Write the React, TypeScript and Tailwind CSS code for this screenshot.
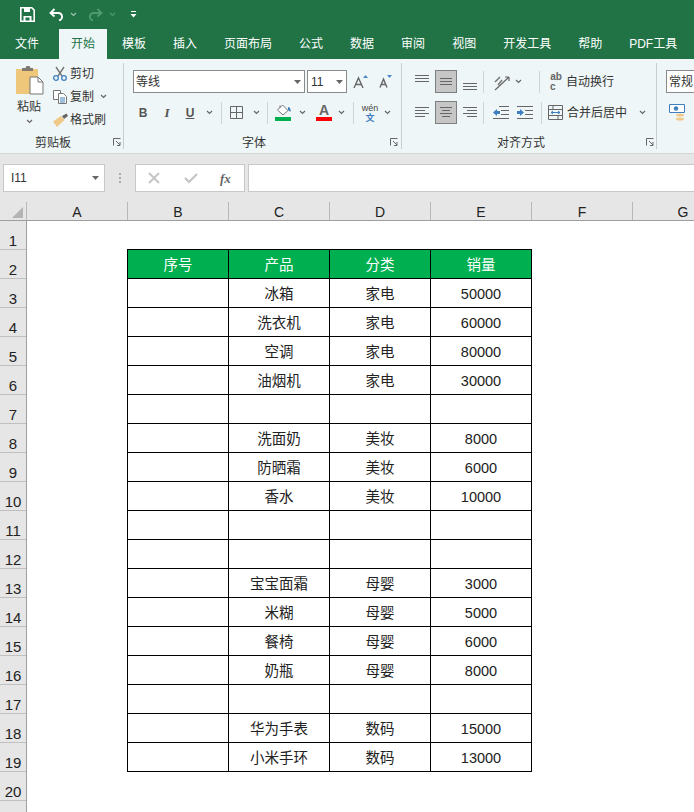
import type { ReactNode } from "react";

const font = `"Liberation Sans", "Noto Sans CJK SC", sans-serif`;

const tabs = ["文件", "开始", "模板", "插入", "页面布局", "公式", "数据", "审阅", "视图", "开发工具", "帮助", "PDF工具"];

const rows = [
  ["冰箱", "家电", "50000"],
  ["洗衣机", "家电", "60000"],
  ["空调", "家电", "80000"],
  ["油烟机", "家电", "30000"],
  ["", "", ""],
  ["洗面奶", "美妆", "8000"],
  ["防晒霜", "美妆", "6000"],
  ["香水", "美妆", "10000"],
  ["", "", ""],
  ["", "", ""],
  ["宝宝面霜", "母婴", "3000"],
  ["米糊", "母婴", "5000"],
  ["餐椅", "母婴", "6000"],
  ["奶瓶", "母婴", "8000"],
  ["", "", ""],
  ["华为手表", "数码", "15000"],
  ["小米手环", "数码", "13000"],
];

function Chevron({ color = "#666" }: { color?: string }) {
  return (
    <svg width="7" height="5" viewBox="0 0 7 5" className="shrink-0">
      <path d="M1 1l2.500 2.500L6 1" fill="none" stroke={color} strokeWidth="1.200" />
    </svg>
  );
}

function Caret() {
  return (
    <svg width="7" height="4" viewBox="0 0 7 4" className="shrink-0">
      <path d="M0 0h7L3.500 4z" fill="#666" />
    </svg>
  );
}

function Launcher({ className }: { className: string }) {
  return (
    <svg width="8" height="8" viewBox="0 0 8 8" className={className}>
      <path d="M.5 7.500V.5h7M3 3l4 4M7 4v3.500H4" fill="none" stroke="#666" strokeWidth="1" />
    </svg>
  );
}

function Sep({ className = "h-[22px]" }: { className?: string }) {
  return <div className={`w-px shrink-0 bg-[#cfd4d5] ${className}`} />;
}

// lines of the align buttons, y and x ranges given per line
function Lines({ lines, color = "#666" }: { lines: [number, number, number][]; color?: string }) {
  return (
    <svg width="14" height="14" viewBox="0 0 14 14" className="shrink-0">
      {lines.map(([y, a, b]) => (
        <path key={`${y}-${a}`} d={`M${a} ${y + 0.5}H${b}`} stroke={color} strokeWidth="1" />
      ))}
    </svg>
  );
}

function AlignBox({ children, on }: { children: ReactNode; on?: boolean }) {
  return (
    <div className={`flex h-[23px] w-[22px] shrink-0 items-center justify-center ${on ? "border border-[#7f7f7f] bg-[#c6c6c6]" : ""}`}>
      {children}
    </div>
  );
}

function ClipRow({ icon, label, chevron }: { icon: ReactNode; label: string; chevron?: boolean }) {
  return (
    <div className="flex h-[23px] items-center">
      <div className="flex w-[18px] justify-center">{icon}</div>
      <span className="ml-[1px] text-[12px] leading-none text-[#333]">{label}</span>
      {chevron && <div className="ml-[6px]"><Chevron /></div>}
    </div>
  );
}

function TitleBar() {
  return (
    <div className="flex h-[29px] items-center bg-[#217346] pl-[20px]">
      <svg width="15" height="15" viewBox="0 0 15 15">
        <path d="M.8.8h11l2.400 2.400v11H.8z" fill="none" stroke="#fff" strokeWidth="1.600" />
        <path d="M4 1h6v4H4zM3.500 9h8v5h-8z" fill="#fff" />
        <path d="M5.500 10.500h4v3h-4z" fill="#217346" />
      </svg>
      <svg width="15" height="13" viewBox="0 0 15 13" className="ml-[14px]">
        <path d="M5.500 1L1.500 5l4 3.500M2 5h7c5 0 5.500 6.500 1 7.500" fill="none" stroke="#fff" strokeWidth="1.900" />
      </svg>
      <div className="ml-[6px]"><Chevron color="#9cc4ae" /></div>
      <svg width="15" height="13" viewBox="0 0 15 13" className="ml-[11px]">
        <path d="M9.500 1l4 4-4 3.500M13 5H6c-5 0-5.500 6.500-1 7.500" fill="none" stroke="#4f9a70" strokeWidth="1.900" />
      </svg>
      <div className="ml-[6px]"><Chevron color="#4f9a70" /></div>
      <svg width="7" height="7" viewBox="0 0 7 7" className="ml-[14px]">
        <path d="M1 .5h5" stroke="#fff" strokeWidth="1" />
        <path d="M.5 3h6L3.500 6.500z" fill="#fff" />
      </svg>
    </div>
  );
}

function TabBar() {
  return (
    <div className="flex h-[30px] gap-[3px] bg-[#217346] pl-[3px]">
      {tabs.map((t, i) => (
        <div
          key={t}
          className={`flex items-center px-3 text-[12px] ${i === 0 ? "mr-[5px]" : ""} ${
            i === 1 ? "bg-[#eff6f7] text-[#217346]" : "text-white"
          }`}
        >
          {t}
        </div>
      ))}
    </div>
  );
}

function ClipboardGroup() {
  return (
    <div className="relative flex h-[86px] w-[122px] shrink-0 border-r border-[#c8cdce]">
      <div className="flex w-[49px] flex-col items-center pl-[5px] pt-[2px]">
        <svg width="29" height="30" viewBox="0 0 29 30">
          <path d="M1 4h22v25H1z" fill="#eec77b" />
          <path d="M7 4V3h3.500l1-2h3l1 2H18v3H7z" fill="#807a70" />
          <path d="M15 12h8l5 5v12H15z" fill="#fff" stroke="#777" strokeWidth="1" />
          <path d="M23 12v5h5" fill="none" stroke="#777" strokeWidth="1" />
        </svg>
        <span className="mt-[4px] text-[12px] leading-[16px] text-[#333]">粘贴</span>
        <div className="mt-[4px]"><Chevron /></div>
      </div>
      <div className="-mt-px flex flex-col">
        <ClipRow
          label="剪切"
          icon={
            <svg width="14" height="15" viewBox="0 0 14 15">
              <path d="M3 1l6 9M11 1L5 10" stroke="#777" strokeWidth="1.400" fill="none" />
              <circle cx="3" cy="12" r="2.300" fill="none" stroke="#3f7fbf" strokeWidth="1.300" />
              <circle cx="11" cy="12" r="2.300" fill="none" stroke="#3f7fbf" strokeWidth="1.300" />
            </svg>
          }
        />
        <ClipRow
          label="复制"
          chevron
          icon={
            <svg width="15" height="14" viewBox="0 0 15 14">
              <path d="M.5.500h7v9h-7z" fill="#fff" stroke="#777" />
              <path d="M5.500 3.500h5l3 3v7h-8z" fill="#fff" stroke="#777" />
              <path d="M7 8h5M7 10h5M7 12h5" stroke="#3f7fbf" strokeWidth="1" />
            </svg>
          }
        />
        <ClipRow
          label="格式刷"
          icon={
            <svg width="16" height="14" viewBox="0 0 16 14">
              <path d="M10 3l2 3 4-3-1.500-2.500z" fill="#666" />
              <path d="M9 3L1 8.500 5 14l7.500-7z" fill="#f0c988" />
            </svg>
          }
        />
      </div>
      <span className="absolute left-[33px] top-[72px] text-[12px] leading-[16px] text-[#333]">剪贴板</span>
      <Launcher className="absolute right-[2px] top-[75px]" />
    </div>
  );
}

function FontGroup() {
  return (
    <div className="relative h-[86px] w-[278px] shrink-0 border-r border-[#c8cdce] pl-[9px] pt-[7px]">
      <div className="flex h-[23px] items-center">
        <div className="flex h-[23px] w-[172px] items-center justify-between border border-[#8a8a8a] bg-white pl-[2px] pr-[3px] text-[12px] text-[#333]">
          等线
          <Caret />
        </div>
        <div className="ml-[2px] flex h-[23px] w-[40px] items-center justify-between border border-[#8a8a8a] bg-white pl-[3px] pr-[3px] text-[12px] text-[#333]">
          11
          <Caret />
        </div>
        <svg width="16" height="14" viewBox="0 0 16 14" className="ml-[6px]">
          <path d="M1 13L5.500 3 10 13M3 9.500h5" fill="none" stroke="#666" strokeWidth="1.400" />
          <path d="M10 3l2.500-3L15 3z" fill="#4a86c5" />
        </svg>
        <svg width="14" height="13" viewBox="0 0 14 13" className="ml-[10px]">
          <path d="M1 12.500L4.500 4 8 12.500M2.500 9.500h4" fill="none" stroke="#666" strokeWidth="1.400" />
          <path d="M8 0h5l-2.500 3z" fill="#4a86c5" />
        </svg>
      </div>
      <div className="mt-[8px] flex h-[23px] items-center">
        <span className="ml-[5px] w-[10px] text-center text-[12px] font-bold text-[#555]">B</span>
        <span className="ml-[15px] w-[8px] text-center font-['Liberation_Serif'] text-[13px] font-bold italic text-[#555]">I</span>
        <span className="ml-[13px] w-[12px] text-center text-[12px] font-bold text-[#555] underline">U</span>
        <div className="ml-[10px]"><Chevron /></div>
        <div className="ml-[8px]"><Sep /></div>
        <svg width="13" height="13" viewBox="0 0 13 13" className="ml-[8px]">
          <path d="M.5.500h12v12H.500zM6.500.500v12M.500 6.500h12" fill="none" stroke="#666" />
        </svg>
        <div className="ml-[10px]"><Chevron /></div>
        <div className="ml-[7px]"><Sep /></div>
        <div className="ml-[7px] flex w-[16px] flex-col items-center">
          <svg width="15" height="12" viewBox="0 0 15 12">
            <path d="M6.500 1L12 6.500 7 11 1.500 6z" fill="#fff" stroke="#777" />
            <path d="M4 1.500V4" stroke="#777" />
            <path d="M12 3c2 0 3 2 2.500 5L12 6z" fill="#3f7fbf" />
          </svg>
          <div className="mt-[1px] h-[4px] w-[16px] bg-[#00b050]" />
        </div>
        <div className="ml-[8px]"><Chevron /></div>
        <div className="ml-[10px] flex w-[16px] flex-col items-center">
          <span className="h-[12px] text-[14px] font-bold leading-[13px] text-[#666]">A</span>
          <div className="mt-[1px] h-[4px] w-[16px] bg-[#ff0000]" />
        </div>
        <div className="ml-[6px]"><Chevron /></div>
        <div className="ml-[8px]"><Sep /></div>
        <div className="ml-[8px] flex w-[16px] flex-col items-center">
          <span className="text-[9px] leading-[10px] text-[#444]">wén</span>
          <span className="text-[9px] font-bold leading-[10px] text-[#3f7fbf]">文</span>
        </div>
        <div className="ml-[6px]"><Chevron /></div>
      </div>
      <span className="absolute left-[118px] top-[72px] text-[12px] leading-[16px] text-[#333]">字体</span>
      <Launcher className="absolute right-[3px] top-[75px]" />
    </div>
  );
}

function AlignGroup() {
  return (
    <div className="relative h-[86px] w-[255px] shrink-0 border-r border-[#c8cdce] pl-[13px] pt-[7px]">
      <div className="flex h-[23px] items-center">
        <div className="mb-[6px]"><Lines lines={[[3, 0, 14], [6, 0, 14], [9, 0, 14]]} /></div>
        <div className="ml-[6px]">
          <AlignBox on>
            <Lines lines={[[3, 1, 13], [6, 1, 13], [9, 1, 13]]} />
          </AlignBox>
        </div>
        <div className="ml-[6px] mt-[8px]"><Lines lines={[[4, 0, 14], [7, 0, 14], [10, 0, 14]]} /></div>
        <div className="ml-[6px]"><Sep /></div>
        <svg width="18" height="18" viewBox="0 0 18 18" className="ml-[9px]">
          <path d="M2 17L16 4M16 4h-4M16 4v4" fill="none" stroke="#666" strokeWidth="1.200" />
          <path d="M2 9l5-5M5 12l4-5" stroke="#777" strokeWidth="1.500" />
        </svg>
        <div className="ml-[4px]"><Chevron /></div>
        <div className="ml-[17px]"><Sep /></div>
        <div className="ml-[10px] flex w-[12px] flex-col items-center text-[10px] font-bold leading-[10px] text-[#666]">
          <span>ab</span>
          <span className="self-start">c</span>
        </div>
        <span className="ml-[4px] text-[12px] text-[#333]">自动换行</span>
      </div>
      <div className="mt-[8px] flex h-[23px] items-center">
        <Lines lines={[[1, 0, 14], [4, 0, 10], [7, 0, 14], [10, 0, 10]]} />
        <div className="ml-[6px]">
          <AlignBox on>
            <Lines lines={[[1, 1, 13], [4, 3, 11], [7, 1, 13], [10, 3, 11]]} />
          </AlignBox>
        </div>
        <div className="ml-[6px]"><Lines lines={[[1, 0, 14], [4, 4, 14], [7, 0, 14], [10, 4, 14]]} /></div>
        <div className="ml-[6px]"><Sep /></div>
        <svg width="16" height="13" viewBox="0 0 16 13" className="ml-[9px]">
          <path d="M6 .500h10M8 4.500h8M8 8.500h8M0 12.500h16" stroke="#666" />
          <path d="M0 6.500L4 3v2h3v3H4v2z" fill="#3f7fbf" />
        </svg>
        <svg width="16" height="13" viewBox="0 0 16 13" className="ml-[8px]">
          <path d="M0 .500h16M8 4.500h8M8 8.500h8M0 12.500h16" stroke="#666" />
          <path d="M7 6.500L3 3v2H0v3h3v2z" fill="#3f7fbf" />
        </svg>
        <div className="ml-[8px]"><Sep /></div>
        <svg width="15" height="15" viewBox="0 0 15 15" className="ml-[6px]">
          <path d="M.5.500h14v14H.500zM.5 4.500h14M.5 10.500h14M5 .500v4M10 10.500v4" fill="none" stroke="#666" />
          <path d="M3 7.500h9M3 7.500l2-1.500M3 7.500L5 9M12 7.500L10 6M12 7.500L10 9" fill="none" stroke="#3f7fbf" />
        </svg>
        <span className="ml-[4px] text-[12px] text-[#333]">合并后居中</span>
        <div className="ml-[12px]"><Chevron /></div>
      </div>
      <span className="absolute left-[95px] top-[72px] text-[12px] leading-[16px] text-[#333]">对齐方式</span>
      <Launcher className="absolute right-[2px] top-[75px]" />
    </div>
  );
}

function NumberGroup() {
  return (
    <div className="h-[86px] flex-1 pl-[9px] pt-[7px]">
      <div className="flex h-[23px] w-[40px] items-center border border-[#8a8a8a] bg-white pl-[2px] text-[12px] text-[#333]">常规</div>
      <div className="mt-[11px] flex items-center pl-[3px]">
        <svg width="16" height="17" viewBox="0 0 16 17">
          <path d="M.5.500h15v8H.500z" fill="#fff" stroke="#3f7fbf" />
          <circle cx="7" cy="4.500" r="2.200" fill="#3f7fbf" />
          <ellipse cx="11" cy="11" rx="4" ry="1.500" fill="#f0c988" />
          <ellipse cx="11" cy="15" rx="4" ry="1.500" fill="#f0c988" />
        </svg>
      </div>
    </div>
  );
}

function Ribbon() {
  return (
    <div className="flex h-[94px] bg-[#eff6f7] pl-[2px] pt-[4px]">
      <ClipboardGroup />
      <FontGroup />
      <AlignGroup />
      <NumberGroup />
    </div>
  );
}

function FormulaBar() {
  return (
    <div className="h-[49px] border-t border-[#d5d5d5] bg-[#e6e6e6] pt-[10px]">
      <div className="flex h-[28px]">
        <div className="ml-[3px] flex w-[102px] items-center justify-between border border-[#c8c8c8] bg-white pl-[7px] pr-[5px] text-[12px] text-[#333]">
          I11
          <Caret />
        </div>
        <div className="flex w-[30px] flex-col items-center justify-center gap-[2px]">
          <div className="h-[2px] w-[2px] bg-[#aaa]" />
          <div className="h-[2px] w-[2px] bg-[#aaa]" />
          <div className="h-[2px] w-[2px] bg-[#aaa]" />
        </div>
        <div className="flex w-[110px] items-center border border-[#c8c8c8] bg-white pl-[12px]">
          <svg width="12" height="12" viewBox="0 0 12 12">
            <path d="M1 1l10 10M11 1L1 11" stroke="#c4c4c4" strokeWidth="1.800" />
          </svg>
          <svg width="14" height="12" viewBox="0 0 14 12" className="ml-[24px]">
            <path d="M1 6l4 4 8-8" fill="none" stroke="#c4c4c4" strokeWidth="2.200" />
          </svg>
          <span className="ml-[22px] font-['Liberation_Serif'] text-[13px] font-bold italic leading-none text-[#666]">fx</span>
        </div>
        <div className="ml-[3px] flex-1 border-y border-l border-[#c8c8c8] bg-white" />
      </div>
    </div>
  );
}

function ColumnHeader() {
  const cols = ["A", "B", "C", "D", "E", "F", "G"];
  return (
    <div className="flex h-[19px] items-end overflow-hidden border-b border-[#9e9e9e] bg-[#e6e6e6]">
      <div className="relative h-[18px] w-[27px] shrink-0 border-r border-[#b8b8b8]">
        <svg width="12" height="11" viewBox="0 0 12 11" className="absolute left-[12px] top-[5px]">
          <path d="M11 0v11H0z" fill="#b4b4b4" />
        </svg>
      </div>
      {cols.map((c) => (
        <div
          key={c}
          className="flex h-[18px] w-[101px] shrink-0 items-center justify-center border-r border-[#b8b8b8] pt-[2px] text-[14px] leading-none text-[#222]"
        >
          {c}
        </div>
      ))}
    </div>
  );
}

function Sheet() {
  return (
    <div className="flex flex-1 overflow-hidden">
      <div className="w-[27px] shrink-0 border-r border-[#9e9e9e] bg-[#e6e6e6]">
        {Array.from({ length: 20 }, (_, i) => (
          <div
            key={i}
            className="flex h-[29px] items-end justify-center border-b border-[#c0c0c0] text-[15px] leading-[16px] text-[#222]"
          >
            {i + 1}
          </div>
        ))}
      </div>
      <div className="flex-1 bg-white pl-[100px] pt-[28px]">
        <div className="w-[405px] border-l border-t border-black">
          <div className="grid grid-cols-[101px_101px_101px_101px]">
            {["序号", "产品", "分类", "销量"].map((h) => (
              <div
                key={h}
                className="flex h-[29px] items-center justify-center border-b border-r border-black bg-[#00b050] pt-[3px] text-[14.5px] text-white"
              >
                {h}
              </div>
            ))}
            {rows.map((r, i) => (
              <div key={i} className="contents">
                <div className="h-[29px] border-b border-r border-black" />
                {r.map((v, j) => (
                  <div
                    key={j}
                    className="flex h-[29px] items-center justify-center border-b border-r border-black pt-[4px] text-[14.5px] text-[#222]"
                  >
                    {v}
                  </div>
                ))}
              </div>
            ))}
          </div>
        </div>
      </div>
    </div>
  );
}

export default function App() {
  return (
    <div className="flex h-[812px] w-[694px] flex-col overflow-hidden bg-white" style={{ fontFamily: font }}>
      <TitleBar />
      <TabBar />
      <Ribbon />
      <FormulaBar />
      <ColumnHeader />
      <Sheet />
    </div>
  );
}
